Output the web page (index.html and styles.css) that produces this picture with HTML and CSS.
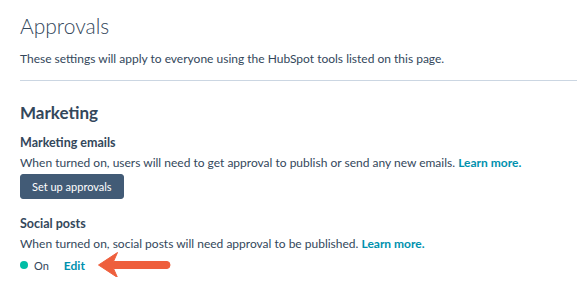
FILE: index.html
```html
<!DOCTYPE html>
<html lang="en">
<head>
    <meta charset="UTF-8">
    <meta name="viewport" content="width=device-width, initial-scale=1.0">
    <title>Approvals</title>
    <link rel="stylesheet" href="styles.css">
</head>
<body>
    <div class="page">
        <h1 class="pageTitle">Approvals</h1>
        <p class="intro">These settings will apply to everyone using the HubSpot tools listed on this page.</p>
        <hr class="divider">

        <h2 class="sectionTitle">Marketing</h2>

        <div class="setting">
            <h3 class="settingName">Marketing emails</h3>
            <p class="settingText">When turned on, users will need to get approval to publish or send any new emails. <a href="#" class="link">Learn more.</a></p>
            <button class="btn">Set up approvals</button>
        </div>

        <div class="setting second">
            <h3 class="settingName">Social posts</h3>
            <p class="settingText">When turned on, social posts will need approval to be published. <a href="#" class="link">Learn more.</a></p>
            <div class="status">
                <span class="dot"></span>
                <span class="statusLabel">On</span>
                <a href="#" class="link editLink">Edit</a>
                <!-- callout arrow -->
                <svg class="arrow" width="74" height="28" viewBox="0 0 74 28">
                    <path d="M1.5 14 L20.5 1.5 L16.5 10.5 L70 10.5 Q73 10.7 73 14 Q73 17.3 70 17.5 L16.5 17.5 L20.5 26.5 Z" fill="#ee5f3d" stroke="#ee5f3d" stroke-width="1" stroke-linejoin="round"/>
                </svg>
            </div>
        </div>
    </div>
</body>
</html>
```

FILE: styles.css
```css
body {
  margin: 0;
  background: #fff;
  color: #33475b;
  font-family: Lato, "Liberation Sans", sans-serif;
}

.page {
  padding: 12px 0 0 20px;
}

.pageTitle {
  margin: 0;
  font-size: 21px;
  font-weight: 300;
  line-height: 28px;
}

.intro {
  margin: 10px 0 0;
  font-size: 12px;
  line-height: 18px;
}

.divider {
  margin: 12px 0 0;
  border: 0;
  border-top: 1px solid #cbd6e2;
}

.sectionTitle {
  margin: 20px 0 0;
  font-size: 17px;
  font-weight: 700;
  line-height: 24px;
}

.setting {
  margin-top: 9px;
}

.setting.second {
  margin-top: 16px;
}

.settingName {
  margin: 0;
  font-size: 12.5px;
  font-weight: 700;
  line-height: 18px;
}

.settingText {
  margin: 2px 0 0;
  font-size: 12px;
  line-height: 18px;
}

.link {
  color: #0091ae;
  font-weight: 700;
  text-decoration: none;
}

.btn {
  margin-top: 2px;
  height: 25px;
  padding: 0 11px;
  border: 1px solid #425b76;
  border-radius: 3px;
  background: #425b76;
  color: #fff;
  font-family: inherit;
  font-size: 11px;
}

.status {
  display: flex;
  align-items: center;
  margin-top: 0;
  height: 24px;
  font-size: 11px;
}

.dot {
  width: 8px;
  height: 8px;
  border-radius: 50%;
  background: #00bda5;
}

.statusLabel {
  margin-left: 6px;
}

.editLink {
  margin-left: 15px;
  font-size: 12px;
}

.arrow {
  margin-left: 12px;
}
```
